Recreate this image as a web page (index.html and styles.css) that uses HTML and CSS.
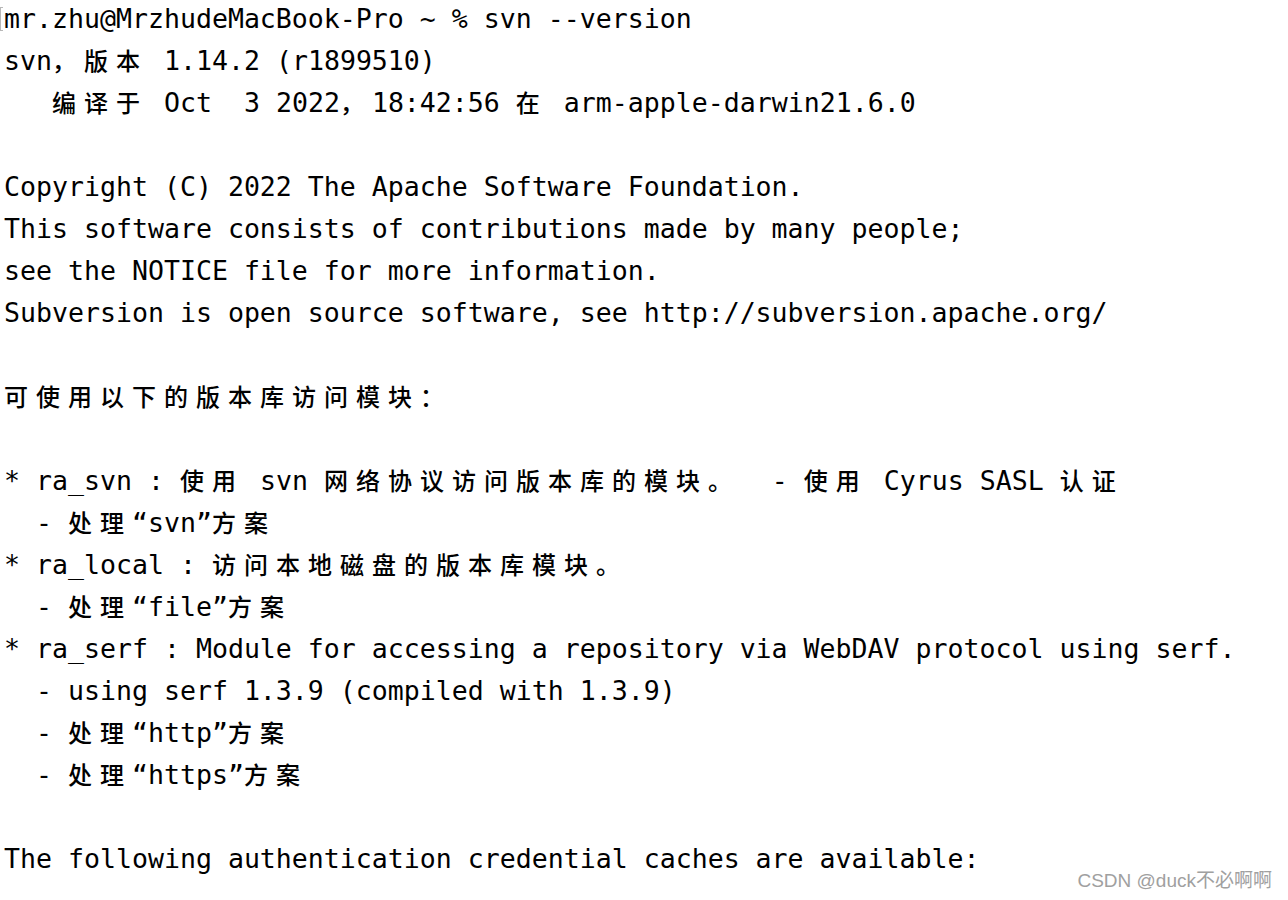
FILE: index.html
```html
<!DOCTYPE html>
<html lang="zh">
<head>
<meta charset="utf-8">
<title>svn --version</title>
<link rel="stylesheet" href="styles.css">
</head>
<body>
<main class="term">
<pre class="out"><span class="cursor"></span>mr.zhu@MrzhudeMacBook-Pro ~ % svn --version
svn<span class="c">，版本</span> 1.14.2 (r1899510)
   <span class="c">编译于</span> Oct  3 2022<span class="c">，</span>18:42:56 <span class="c">在</span> arm-apple-darwin21.6.0

Copyright (C) 2022 The Apache Software Foundation.
This software consists of contributions made by many people;
see the NOTICE file for more information.
Subversion is open source software, see http://subversion.apache.org/

<span class="c">可使用以下的版本库访问模块：</span>

* ra_svn : <span class="c">使用</span> svn <span class="c">网络协议访问版本库的模块。</span>  - <span class="c">使用</span> Cyrus SASL <span class="c">认证</span>
  - <span class="c">处理</span>“svn”<span class="c">方案</span>
* ra_local : <span class="c">访问本地磁盘的版本库模块。</span>
  - <span class="c">处理</span>“file”<span class="c">方案</span>
* ra_serf : Module for accessing a repository via WebDAV protocol using serf.
  - using serf 1.3.9 (compiled with 1.3.9)
  - <span class="c">处理</span>“http”<span class="c">方案</span>
  - <span class="c">处理</span>“https”<span class="c">方案</span>

The following authentication credential caches are available:</pre>
<div class="watermark">CSDN @duck不必啊啊</div>
</main>
</body>
</html>
```

FILE: styles.css
```css
html, body {
  margin: 0;
  padding: 0;
  background: #ffffff;
}

.term {
  position: relative;
  width: 1288px;
  height: 900px;
  overflow: hidden;
  background: #ffffff;
}

.out {
  margin: -2px 0 0 0;
  padding: 0 0 0 4px;
  font-family: "DejaVu Sans Mono", "Noto Sans CJK SC", monospace;
  font-size: 26.57px;
  line-height: 42px;
  color: #000000;
  white-space: pre;
  position: relative;
}

.c {
  font-family: "Noto Sans CJK SC", sans-serif;
  font-size: 24px;
  font-weight: 500;
  letter-spacing: 8px;
  line-height: 1;
}

.cursor {
  position: absolute;
  left: 0;
  top: 9px;
  width: 2px;
  height: 22px;
  border: 1px solid #b8b8b8;
  border-right: none;
}

.watermark {
  position: absolute;
  right: 16px;
  bottom: 8px;
  font-family: "Liberation Sans", "Noto Sans CJK SC", sans-serif;
  font-size: 19px;
  color: #a0a0a0;
  text-shadow: 0 0 1px #ffffff;
}
```
